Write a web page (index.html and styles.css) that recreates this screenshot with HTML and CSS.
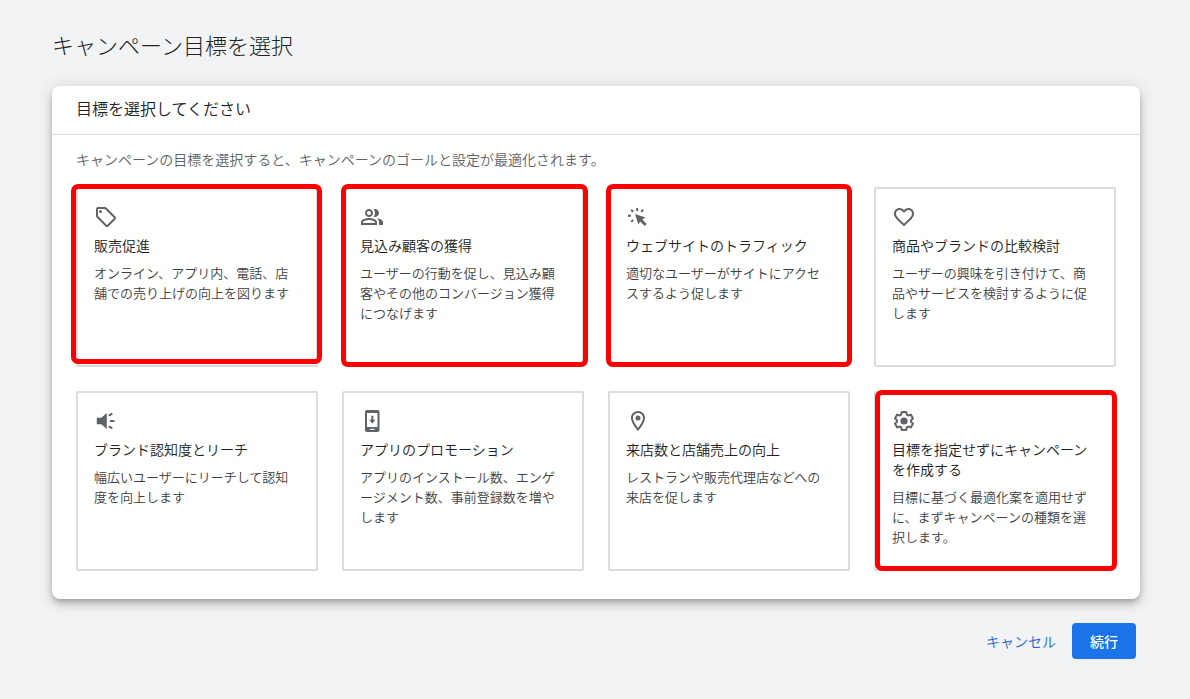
FILE: index.html
```html
<!DOCTYPE html>
<html lang="ja">
<head>
<meta charset="utf-8">
<meta name="viewport" content="width=device-width, initial-scale=1">
<title>キャンペーン目標を選択</title>
<link rel="stylesheet" href="styles.css">
</head>
<body>
<main class="page">
  <h1 class="page-title">キャンペーン目標を選択</h1>
  <section class="panel">
    <h2 class="panel-title">目標を選択してください</h2>
    <div class="panel-body">
      <p class="hint">キャンペーンの目標を選択すると、キャンペーンのゴールと設定が最適化されます。</p>
      <div class="goals">
        <button type="button" class="goal">
          <svg class="icon" viewBox="0 0 24 24" aria-hidden="true"><path d="M21.41 11.58l-9-9C12.05 2.22 11.55 2 11 2H4c-1.1 0-2 .9-2 2v7c0 .55.22 1.05.59 1.42l9 9c.36.36.86.58 1.41.58s1.05-.22 1.41-.59l7-7c.37-.36.59-.86.59-1.41s-.23-1.06-.59-1.42zM13 20.01L4 11V4h7v-.01l9 9-7 7.02z"/><circle cx="6.5" cy="6.5" r="1.5"/></svg>
          <span class="goal-name">販売促進</span>
          <span class="goal-text">オンライン、アプリ内、電話、店舗での売り上げの向上を図ります</span>
          <span class="mark mark-sales"></span>
        </button>
        <button type="button" class="goal">
          <svg class="icon" viewBox="0 0 24 24" aria-hidden="true"><path d="M16.67 13.13C18.04 14.06 19 15.32 19 17v3h4v-3c0-2.18-3.57-3.47-6.33-3.87zM15 12c2.21 0 4-1.79 4-4s-1.79-4-4-4c-.47 0-.91.1-1.33.24C14.5 5.27 15 6.58 15 8s-.5 2.73-1.33 3.76c.42.14.86.24 1.33.24zM9 12c2.21 0 4-1.79 4-4s-1.79-4-4-4-4 1.79-4 4 1.79 4 4 4zm0-6c1.1 0 2 .9 2 2s-.9 2-2 2-2-.9-2-2 .9-2 2-2zM9 13c-2.67 0-8 1.34-8 4v3h16v-3c0-2.66-5.33-4-8-4zm6 5H3v-.99C3.2 16.29 6.3 15 9 15s5.8 1.29 6 2v1z"/></svg>
          <span class="goal-name">見込み顧客の獲得</span>
          <span class="goal-text">ユーザーの行動を促し、見込み顧客やその他のコンバージョン獲得につなげます</span>
          <span class="mark mark-leads"></span>
        </button>
        <button type="button" class="goal">
          <svg class="icon" viewBox="0 0 24 24" aria-hidden="true"><path d="M9 9l10.5 3.6-3.3 2 4.5 4.4-1.9 1.9-4.5-4.5-2 3.2z"/><path class="rays" d="M11.2 3v3M2 10.8h3M5.2 4.8l2 2M17.2 4.8l-2 2M5.2 16.9l2-2"/></svg>
          <span class="goal-name">ウェブサイトのトラフィック</span>
          <span class="goal-text">適切なユーザーがサイトにアクセスするよう促します</span>
          <span class="mark mark-traffic"></span>
        </button>
        <button type="button" class="goal">
          <svg class="icon" viewBox="0 0 24 24" aria-hidden="true"><path d="M16.5 3c-1.74 0-3.41.81-4.5 2.09C10.91 3.81 9.24 3 7.5 3 4.42 3 2 5.42 2 8.5c0 3.78 3.4 6.86 8.55 11.54L12 21.35l1.45-1.32C18.6 15.36 22 12.28 22 8.5 22 5.42 19.58 3 16.5 3zm-4.4 15.55l-.1.1-.1-.1C7.14 14.24 4 11.39 4 8.5 4 6.5 5.5 5 7.5 5c1.54 0 3.04.99 3.57 2.36h1.87C13.46 5.99 14.96 5 16.5 5c2 0 3.5 1.5 3.5 3.5 0 2.89-3.14 5.74-7.9 10.05z"/></svg>
          <span class="goal-name">商品やブランドの比較検討</span>
          <span class="goal-text">ユーザーの興味を引き付けて、商品やサービスを検討するように促します</span>
        </button>
        <button type="button" class="goal">
          <svg class="icon" viewBox="0 0 24 24" aria-hidden="true"><path d="M2.8 8.7H7.3L12.8 4v16l-5.500-4.700H2.8z"/><path class="rays" d="M14.7 6.7l3.6-2.1M16 12h4.4M14.7 17.3l3.6 2.1"/></svg>
          <span class="goal-name">ブランド認知度とリーチ</span>
          <span class="goal-text">幅広いユーザーにリーチして認知度を向上します</span>
        </button>
        <button type="button" class="goal">
          <svg class="icon" viewBox="0 0 24 24" aria-hidden="true"><path fill-rule="evenodd" d="M7 1h10.5a2 2 0 0 1 2 2v18a2 2 0 0 1-2 2H7a2 2 0 0 1-2-2V3a2 2 0 0 1 2-2zM7 4v14h10.5V4zM10.2 19.8v1.2h4.2v-1.2zM11.3 6.8h2v4h2.2l-3.2 3.7-3.2-3.7h2.2z"/></svg>
          <span class="goal-name">アプリのプロモーション</span>
          <span class="goal-text">アプリのインストール数、エンゲージメント数、事前登録数を増やします</span>
        </button>
        <button type="button" class="goal">
          <svg class="icon" viewBox="0 0 24 24" aria-hidden="true"><path d="M12 2C8.13 2 5 5.13 5 9c0 5.25 7 13 7 13s7-7.75 7-13c0-3.87-3.13-7-7-7zM7 9c0-2.76 2.24-5 5-5s5 2.24 5 5c0 2.88-2.88 7.19-5 9.88C9.92 16.21 7 11.85 7 9z"/><circle cx="12" cy="9" r="2.5"/></svg>
          <span class="goal-name">来店数と店舗売上の向上</span>
          <span class="goal-text">レストランや販売代理店などへの来店を促します</span>
        </button>
        <button type="button" class="goal">
          <svg class="icon" viewBox="0 0 24 24" aria-hidden="true"><path class="gear" d="M9.800 3h4.400L14.900 5.700L16.200 6.500L18.800 5.600L21 9.400L19 11.300V12.700L21 14.600L18.800 18.400L16.200 17.500L14.900 18.300L14.200 21H9.800L9.100 18.300L7.800 17.500L5.200 18.400L3 14.600L5 12.700V11.300L3 9.400L5.200 5.600L7.800 6.500L9.100 5.700z"/><circle cx="12" cy="12" r="3.6"/></svg>
          <span class="goal-name">目標を指定せずにキャンペーンを作成する</span>
          <span class="goal-text">目標に基づく最適化案を適用せずに、まずキャンペーンの種類を選択します。</span>
          <span class="mark mark-none"></span>
        </button>
      </div>
    </div>
  </section>
  <div class="actions">
    <button type="button" class="btn btn-text">キャンセル</button>
    <button type="button" class="btn btn-primary">続行</button>
  </div>
</main>
</body>
</html>
```
FILE: styles.css
```css
* {
  box-sizing: border-box;
}

body {
  margin: 0;
  background: #f1f3f4;
  color: #202124;
  font-family: "Noto Sans CJK JP", sans-serif;
  font-weight: 350;
}

.page {
  padding: 28px 50px 40px 52px;
}

.page-title {
  margin: 0 0 26px;
  font-size: 22px;
  font-weight: 300;
  line-height: 32px;
}

.panel {
  background: #fff;
  border-radius: 8px;
  box-shadow:
    0 3px 5px -1px rgba(0, 0, 0, 0.2),
    0 6px 10px 0 rgba(0, 0, 0, 0.14),
    0 1px 18px 0 rgba(0, 0, 0, 0.12);
}

.panel-title {
  margin: 0;
  padding: 10px 24px 14px;
  border-bottom: 1px solid #dadce0;
  font-size: 16px;
  font-weight: 350;
  line-height: 24px;
}

.panel-body {
  padding: 14px 24px 28px;
}

.hint {
  margin: 0 0 18px;
  color: #5f6368;
  font-size: 14px;
  line-height: 20px;
}

.goals {
  display: grid;
  grid-template-columns: repeat(4, minmax(0, 1fr));
  grid-auto-rows: minmax(180px, auto);
  gap: 24px;
}

.goal {
  position: relative;
  display: flex;
  flex-direction: column;
  align-items: flex-start;
  padding: 16px;
  border: 2px solid #dadce0;
  border-radius: 2px;
  background: #fff;
  color: #202124;
  font: inherit;
  line-height: 20px;
  text-align: left;
  line-break: loose;
  cursor: pointer;
}

.icon {
  display: block;
  width: 24px;
  height: 24px;
  margin-bottom: 6px;
  fill: #5f6368;
}

.rays {
  fill: none;
  stroke: #5f6368;
  stroke-width: 2;
}

.gear {
  fill: none;
  stroke: #5f6368;
  stroke-width: 2;
  stroke-linejoin: round;
}

.goal-name {
  margin-bottom: 8px;
  font-size: 14px;
}

.goal-text {
  color: #3c4043;
  font-size: 13px;
}

.mark {
  position: absolute;
  z-index: 1;
  border: 5px solid #f00;
  border-radius: 7px;
  pointer-events: none;
}

.mark-sales {
  inset: -5px -6px 1px -7px;
}

.mark-leads {
  inset: -5px -6px -2px -3px;
}

.mark-traffic {
  inset: -5px -4px -2px -4px;
}

.mark-none {
  inset: -3px -3px -2px -1px;
}

.actions {
  display: flex;
  justify-content: flex-end;
  padding: 24px 4px 0;
}

.btn {
  height: 36px;
  padding: 0 16px;
  border: 0;
  border-radius: 4px;
  font: inherit;
  font-size: 14px;
  cursor: pointer;
}

.btn-text {
  background: transparent;
  color: #1967d2;
}

.btn-primary {
  min-width: 64px;
  background: #1a73e8;
  color: #fff;
  font-weight: 500;
}
```
